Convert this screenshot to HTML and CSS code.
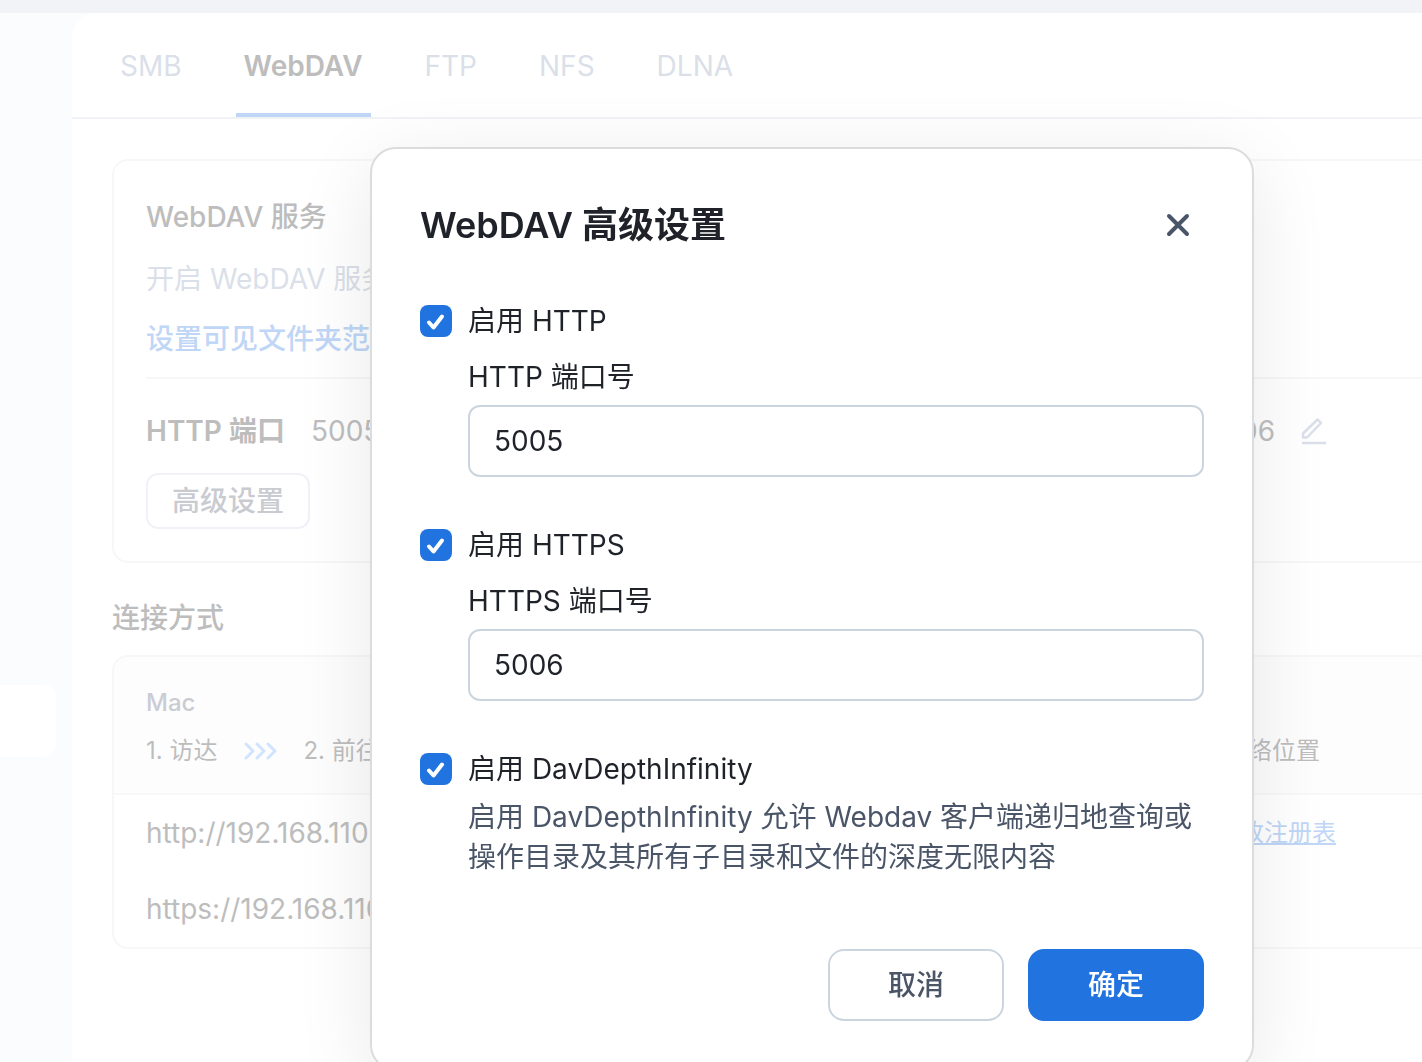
FILE: index.html
```
<!DOCTYPE html>
<html lang="zh-CN">
<head>
    <meta charset="UTF-8">
    <meta name="viewport" content="width=device-width, initial-scale=1.0">
    <title>WebDAV 高级设置</title>
    <link rel="stylesheet" href="styles.css">
</head>
<body>
    <div class="topbar"></div>
    <div class="layout">
        <aside class="sidebar">
            <div class="sidebar-item"></div>
        </aside>
        <main class="panel">
            <nav class="tabs">
                <a class="tab" href="#smb">SMB</a>
                <a class="tab active" href="#webdav">WebDAV</a>
                <a class="tab" href="#ftp">FTP</a>
                <a class="tab" href="#nfs">NFS</a>
                <a class="tab" href="#dlna">DLNA</a>
            </nav>
            <div class="content">
                <section class="card service">
                    <h2 class="service-title">WebDAV 服务</h2>
                    <p class="service-desc">开启 WebDAV 服务</p>
                    <a class="service-link" href="#folders">设置可见文件夹范围</a>
                    <div class="ports">
                        <div class="port"><b>HTTP 端口</b><span>5005</span></div>
                        <div class="port">
                            <span>5006</span>
                            <svg class="edit-icon" width="26" height="28" viewBox="0 0 26 28" fill="none" stroke="currentColor" stroke-width="2.5">
                                <path d="M2 20.5V16.5L16.5 2.5L20 6L6 20.5Z" stroke-linejoin="round"/>
                                <path d="M1 26H25"/>
                            </svg>
                        </div>
                    </div>
                    <button class="advanced" type="button">高级设置</button>
                </section>

                <h2 class="section-title">连接方式</h2>
                <section class="card">
                    <div class="guide">
                        <h3 class="guide-title">Mac</h3>
                        <div class="steps">
                            <div class="step-list">
                                <span>1. 访达</span>
                                <svg class="arrows" width="34" height="18" viewBox="0 0 34 18" fill="none" stroke="currentColor" stroke-width="3" stroke-linecap="round" stroke-linejoin="round">
                                    <path d="M3 2L10 9L3 16M14 2L21 9L14 16M25 2L32 9L25 16"/>
                                </svg>
                                <span>2. 前往</span>
                            </div>
                            <span>网络位置</span>
                        </div>
                    </div>
                    <div class="address">
                        <span>http://192.168.110</span>
                        <a class="registry-link" href="#registry">修改注册表</a>
                    </div>
                    <div class="address"><span>https://192.168.110</span></div>
                </section>
            </div>
        </main>
    </div>

    <div class="overlay">
        <form class="modal" role="dialog" aria-labelledby="modal-title">
            <header class="modal-header">
                <h1 class="modal-title" id="modal-title">WebDAV 高级设置</h1>
                <button class="close" type="button" aria-label="关闭">
                    <svg width="24" height="24" viewBox="0 0 24 24" fill="none" stroke="currentColor" stroke-width="4" stroke-linecap="round">
                        <path d="M3 3L21 21M21 3L3 21"/>
                    </svg>
                </button>
            </header>

            <div class="group">
                <label class="check"><input type="checkbox" checked>启用 HTTP</label>
                <div class="field">
                    <label for="http-port">HTTP 端口号</label>
                    <input class="port-input" id="http-port" type="text" value="5005">
                </div>
            </div>
            <div class="group">
                <label class="check"><input type="checkbox" checked>启用 HTTPS</label>
                <div class="field">
                    <label for="https-port">HTTPS 端口号</label>
                    <input class="port-input" id="https-port" type="text" value="5006">
                </div>
            </div>
            <div class="group">
                <label class="check"><input type="checkbox" checked>启用 DavDepthInfinity</label>
                <p class="hint">启用 DavDepthInfinity 允许 Webdav 客户端递归地查询或操作目录及其所有子目录和文件的深度无限内容</p>
            </div>

            <footer class="modal-footer">
                <button class="btn" type="button">取消</button>
                <button class="btn btn-primary" type="submit">确定</button>
            </footer>
        </form>
    </div>
</body>
</html>
```
FILE: styles.css
```
* {
    box-sizing: border-box;
}
body {
    margin: 0;
    height: 100vh;
    display: flex;
    flex-direction: column;
    overflow: hidden;
    background: #fbfcfe;
    color: #bdbdbd;
    font-family: Inter, "Noto Sans CJK SC", sans-serif;
    font-size: 28px;
    line-height: 40px;
}
h1, h2, h3, p {
    margin: 0;
    font-size: inherit;
}
a {
    color: inherit;
    text-decoration: none;
}
button, input {
    font: inherit;
}
button {
    cursor: pointer;
}

/* Page behind the dialog */
.topbar {
    flex: none;
    height: 13px;
    background: #f2f3f7;
}
.layout {
    flex: 1;
    display: flex;
}
.sidebar {
    width: 72px;
    padding: 672px 16px 0 0;
}
.sidebar-item {
    height: 72px;
    border-radius: 0 12px 12px 0;
    background: #fff;
}
.panel {
    flex: 1;
    background: #fff;
    border-radius: 24px 0 0 0;
}

/* Tabs */
.tabs {
    display: flex;
    gap: 46px;
    height: 106px;
    padding: 0 40px;
    border-bottom: 2px solid #f1f2f7;
}
.tab {
    padding: 33px 8px 0;
    color: #dadfe9;
}
.tab.active {
    color: #bdbdbd;
    font-weight: 600;
    border-bottom: 4px solid #bfd6f6;
}

/* Cards run off the right edge */
.content {
    padding: 40px 0 0 40px;
}
.card {
    border: 2px solid #f7f7f9;
    border-right: none;
    border-radius: 16px 0 0 16px;
}
.service {
    padding: 36px 0 32px 32px;
}
.service-title {
    font-weight: 500;
}
.service-desc {
    margin: 22px 0 20px;
    color: #dadfe9;
}
.service-link {
    display: block;
    color: #bfd6f6;
    font-weight: 500;
}
.ports {
    display: flex;
    justify-content: space-between;
    margin: 18px 0 22px;
    padding: 32px 95px 0 0;
    border-top: 2px solid #f7f7f9;
}
.port {
    display: flex;
    align-items: center;
    gap: 26px;
}
.port b {
    font-weight: 600;
}
.edit-icon {
    color: #dadfe9;
}
.advanced {
    display: block;
    height: 56px;
    padding: 0 24px;
    border: 2px solid #f1f1f7;
    border-radius: 12px;
    background: #fff;
    color: #c9cbd1;
    font-weight: 500;
}
.section-title {
    margin: 35px 0 17px;
    font-weight: 500;
}
.guide {
    padding: 30px 0 26px 32px;
    border-bottom: 2px solid #f7f8fa;
    border-radius: 14px 0 0 0;
    background: #fdfdfe;
    font-size: 24px;
    line-height: 32px;
}
.guide-title {
    margin-bottom: 16px;
    color: #cbccd3;
    font-weight: 500;
}
.steps {
    display: flex;
    justify-content: space-between;
    padding-right: 102px;
}
.step-list {
    display: flex;
    align-items: center;
    gap: 26px;
}
.arrows {
    color: #d1e4fe;
}
.address {
    display: flex;
    align-items: center;
    justify-content: space-between;
    height: 76px;
    padding: 0 86px 0 32px;
}
.registry-link {
    color: #bfd6f6;
    font-size: 24px;
    text-decoration: underline;
}

/* Dialog */
.overlay {
    position: fixed;
    inset: 0;
    display: flex;
    align-items: flex-start;
    justify-content: center;
    padding: 147px 0 0 202px;
    overflow: hidden;
}
.modal {
    width: 884px;
    padding: 48px;
    border: 2px solid #dcdcdd;
    border-radius: 26px;
    background: #fff;
    background-clip: padding-box;
    box-shadow: 0 16px 80px rgba(0, 0, 0, 0.09);
    color: #1f2329;
}
.modal-header {
    display: flex;
    align-items: center;
    justify-content: space-between;
    height: 56px;
}
.modal-title {
    font-size: 36px;
    font-weight: 600;
}
.close {
    display: flex;
    padding: 14px;
    border: none;
    background: none;
    color: #4a5568;
}
.group {
    margin-top: 48px;
}
.check {
    display: flex;
    align-items: center;
    gap: 16px;
}
.check input {
    appearance: none;
    width: 32px;
    height: 32px;
    margin: 0;
    border-radius: 8px;
    background: #fff;
    border: 2px solid #cbd5e0;
}
.check input:checked {
    border: none;
    background: #2173df url("data:image/svg+xml,%3Csvg xmlns='http://www.w3.org/2000/svg' viewBox='0 0 32 32' fill='none' stroke='white' stroke-width='4' stroke-linecap='round' stroke-linejoin='round'%3E%3Cpath d='M9 17.5L13.5 22.5L22 11.5'/%3E%3C/svg%3E");
}
.field {
    display: flex;
    flex-direction: column;
    gap: 8px;
    margin: 16px 0 0 48px;
}
.port-input {
    height: 72px;
    padding: 0 24px;
    border: 2px solid #cbd5e0;
    border-radius: 12px;
    color: inherit;
}
.hint {
    margin: 8px 0 0 48px;
    color: #4a5568;
}
.modal-footer {
    display: flex;
    justify-content: flex-end;
    gap: 24px;
    margin-top: 72px;
}
.btn {
    width: 176px;
    height: 72px;
    border: 2px solid #cbd5e0;
    border-radius: 16px;
    background: #fff;
    color: #4a5568;
    font-weight: 500;
}
.btn-primary {
    border: none;
    background: #2173df;
    color: #fff;
}
```
